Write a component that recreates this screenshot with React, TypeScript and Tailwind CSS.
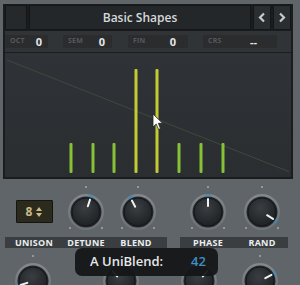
import React from "react";

type KnobProps = { angle: number };

function Knob({ angle }: KnobProps) {
  // 52x50 box, centre at (26,25)
  const cx = 26;
  const cy = 25;
  const rad = ((angle - 90) * Math.PI) / 180;
  const x1 = cx + Math.cos(rad) * 6;
  const y1 = cy + Math.sin(rad) * 6;
  const x2 = cx + Math.cos(rad) * 13;
  const y2 = cy + Math.sin(rad) * 13;
  const a0 = ((angle - 100) * Math.PI) / 180;
  const a1 = ((angle - 80) * Math.PI) / 180;
  const r = 16.5;
  const arc = `M ${cx + Math.cos(a0) * r} ${cy + Math.sin(a0) * r} A ${r} ${r} 0 0 1 ${cx + Math.cos(a1) * r} ${cy + Math.sin(a1) * r}`;
  return (
    <svg width="52" height="50" viewBox="0 0 52 50" className="overflow-visible">
      <defs>
        <radialGradient id="ring" cx="50%" cy="35%" r="60%">
          <stop offset="0%" stopColor="#9aa0a4" />
          <stop offset="100%" stopColor="#6d7377" />
        </radialGradient>
        <radialGradient id="body" cx="45%" cy="35%" r="65%">
          <stop offset="0%" stopColor="#3a3e42" />
          <stop offset="100%" stopColor="#1f2224" />
        </radialGradient>
      </defs>
      <circle cx={cx} cy={cy - 25} r="1" fill="#a4aaae" />
      <circle cx={cx - 16} cy={cy + 16} r="1" fill="#a4aaae" />
      <circle cx={cx + 16} cy={cy + 16} r="1" fill="#a4aaae" />
      <circle cx={cx} cy={cy} r="18" fill="url(#ring)" />
      <circle cx={cx} cy={cy} r="15.5" fill="#25282b" />
      <path d={arc} stroke="#3a8cbd" strokeWidth="2" fill="none" opacity="0.8" />
      <circle cx={cx} cy={cy} r="14" fill="url(#body)" stroke="#14161a" strokeWidth="1" />
      <line x1={x1} y1={y1} x2={x2} y2={y2} stroke="#f2f2f2" strokeWidth="2" strokeLinecap="round" />
    </svg>
  );
}

function Param({ label, value, width, ml, pr }: { label: string; value: string; width: string; ml: string; pr: string }) {
  return (
    <div className={`flex h-[13px] items-center justify-between bg-[#2a2c2e] pl-[5px] ${width} ${ml} ${pr}`}>
      <span className="text-[7px] font-bold tracking-wide text-[#55595d]">{label}</span>
      <span className="text-[11px] font-bold leading-none text-[#e4e6e7]">{value}</span>
    </div>
  );
}

export default function App() {
  const bars = [
    { x: 66, tall: false },
    { x: 88, tall: false },
    { x: 109, tall: false },
    { x: 131, tall: true },
    { x: 152, tall: true },
    { x: 174, tall: false },
    { x: 196, tall: false },
    { x: 218, tall: false },
  ];

  return (
    <div
      className="relative h-[285px] w-[300px] overflow-hidden bg-[#606569]"
      style={{ fontFamily: '"Open Sans", "Liberation Sans", sans-serif' }}
    >
      {/* Oscillator panel */}
      <div className="ml-[3px] mt-[4px] flex h-[175px] w-[290px] flex-col bg-[#1a1c1e] px-[2px] pt-[1px] pb-[2px]">
        {/* Title bar */}
        <div className="flex h-[26px] gap-[2px]">
          <div className="w-[22px] border border-[#141618] bg-[#26292b]" />
          <div className="flex flex-1 items-center justify-center border border-[#141618] bg-[#24272a] text-[12px] font-semibold text-[#d6d8da]">
            Basic Shapes
          </div>
          <div className="flex w-[18px] items-center justify-center border border-[#141618] bg-[#2b2e31]">
            <svg width="8" height="11" viewBox="0 0 8 11">
              <path d="M6 1.5 L2 5.5 L6 9.5" stroke="#c8cbcd" strokeWidth="2.2" fill="none" />
            </svg>
          </div>
          <div className="flex w-[18px] items-center justify-center border border-[#141618] bg-[#2b2e31]">
            <svg width="8" height="11" viewBox="0 0 8 11">
              <path d="M2 1.5 L6 5.5 L2 9.5" stroke="#c8cbcd" strokeWidth="2.2" fill="none" />
            </svg>
          </div>
        </div>

        {/* Pitch params */}
        <div className="mt-[1px] flex h-[21px] items-center bg-[#313436]">
          <Param label="OCT" value="0" width="w-[43px]" ml="ml-0" pr="pr-[6px]" />
          <Param label="SEM" value="0" width="w-[49px]" ml="ml-[15px]" pr="pr-[7px]" />
          <Param label="FIN" value="0" width="w-[60px]" ml="ml-[16px]" pr="pr-[12px]" />
          <Param label="CRS" value="--" width="w-[74px]" ml="ml-[15px]" pr="pr-[20px]" />
        </div>

        {/* Display */}
        <div className="relative mt-[1px] flex-1 bg-gradient-to-b from-[#2f3337] to-[#2a2e31]">
          <svg width="284" height="124" viewBox="0 0 284 124" className="block">
            <line x1="2" y1="7" x2="285" y2="119" stroke="#3f483d" strokeWidth="1" />
            {bars.map((b) => (
              <rect
                key={b.x}
                x={b.x - 1.5}
                y={b.tall ? 16 : 90}
                width="3"
                height={b.tall ? 104 : 30}
                rx="1"
                fill={b.tall ? "#c4cb32" : "#85c236"}
              />
            ))}
          </svg>
          <svg
            className="absolute left-[147px] top-[60px]"
            width="12"
            height="18"
            viewBox="0 0 12 18"
          >
            <path d="M1 1 L1 14 L4.2 11 L6.5 16.5 L8.5 15.6 L6.3 10.3 L10.6 10.3 Z" fill="#ffffff" stroke="#222" strokeWidth="0.8" />
          </svg>
        </div>
      </div>

      {/* Unison controls */}
      <div className="flex pt-[8px]">
        <div className="ml-[5px] flex w-[162px] flex-col">
          <div className="flex h-[50px]">
            <div className="flex w-[58px] items-start justify-center pt-[13px]">
              <div className="flex h-[23px] w-[37px] items-center justify-center gap-[4px] rounded-[1px] border border-[#141410] bg-[#2b2a1d]">
                <span className="text-[12px] font-bold leading-none text-[#c9ba8c]">8</span>
                <svg width="6" height="12" viewBox="0 0 6 12">
                  <path d="M0 5 L3 1 L6 5 Z" fill="#c9ba8c" />
                  <path d="M0 7 L3 11 L6 7 Z" fill="#c9ba8c" />
                </svg>
              </div>
            </div>
            <div className="flex w-[46px] justify-center">
              <Knob angle={18} />
            </div>
            <div className="flex w-[58px] justify-center">
              <Knob angle={-28} />
            </div>
          </div>
          <div className="flex h-[11px] items-center bg-[#3a3e41] text-[9px] font-bold leading-none tracking-wide text-[#eceeef]">
            <span className="w-[58px] text-center">UNISON</span>
            <span className="w-[46px] text-center">DETUNE</span>
            <span className="w-[58px] pr-[4px] text-center">BLEND</span>
          </div>
        </div>

        <div className="ml-[13px] flex w-[108px] flex-col">
          <div className="flex h-[50px]">
            <div className="flex w-[56px] justify-center">
              <Knob angle={0} />
            </div>
            <div className="flex w-[52px] justify-center">
              <Knob angle={122} />
            </div>
          </div>
          <div className="flex h-[11px] items-center bg-[#3a3e41] text-[9px] font-bold leading-none tracking-wide text-[#eceeef]">
            <span className="w-[56px] text-center">PHASE</span>
            <span className="w-[52px] text-center">RAND</span>
          </div>
        </div>
      </div>

      {/* Lower knob row (partially visible) */}
      <div className="mt-[8px] flex">
        <div className="ml-[7px] flex w-[52px] justify-center">
          <Knob angle={-108} />
        </div>
        <div className="ml-[36px] flex w-[52px] justify-center">
          <Knob angle={-40} />
        </div>
        <div className="ml-[26px] flex w-[52px] justify-center">
          <Knob angle={40} />
        </div>
        <div className="ml-[9px] flex w-[52px] justify-center">
          <Knob angle={62} />
        </div>
      </div>

      {/* Value tooltip */}
      <div className="absolute left-[75px] top-[248px] flex h-[28px] w-[143px] items-center rounded-[7px] bg-[#141617]/95 pl-[15px] text-[13px] font-semibold">
        <span className="text-[#e6e7e8]">A UniBlend:</span>
        <span className="ml-[28px] text-[#3f8fc6]">42</span>
      </div>
    </div>
  );
}
